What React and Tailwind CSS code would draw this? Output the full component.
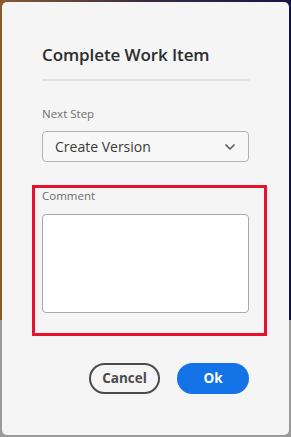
import { ChevronDown } from 'lucide-react';

const App = () => {
  return (
    <div className="relative w-[291px] h-[437px] overflow-hidden" style={{ fontFamily: '"Open Sans", "Noto Sans", sans-serif' }}>
      {/* Backdrop */}
      <div className="flex flex-col h-full">
        <div className="h-[320px] bg-gradient-to-r from-[#8a5a2a] via-[#3a2a40] to-[#16124a]" />
        <div className="flex-1 bg-[#9a9a9a]" />
      </div>

      {/* Dialog */}
      <div className="absolute left-[2px] top-[2px] w-[287px] h-[433px] bg-[#f5f5f5] rounded-[5px] flex flex-col px-[40px]">
        <h2 className="mt-[42px] text-[17px] font-semibold text-[#2c2c2c] leading-[22px] tracking-[-0.1px]">Complete Work Item</h2>
        <div className="mt-[13px] h-[2px] bg-[#e1e1e1]" />

        <label className="mt-[25px] text-[11.5px] text-[#6e6e6e] leading-[16px]">Next Step</label>
        <div className="mt-[9px] h-[31px] rounded-[4px] border border-[#b3b3b3] bg-[#f7f7f7] flex items-center justify-between pl-[12px] pr-[10px]">
          <span className="text-[14px] text-[#3a3a3a]">Create Version</span>
          <ChevronDown size={16} strokeWidth={2.5} className="text-[#5a5a5a]" />
        </div>

        {/* Highlighted comment field */}
        <div className="mt-[23px] -ml-[10px] -mr-[18px] h-[151px] border-[3px] border-[#e8112d] pl-[7px] pr-[15px] flex flex-col">
          <label className="text-[11.5px] text-[#6e6e6e] leading-[16px]">Comment</label>
          <textarea className="mt-[10px] h-[99px] w-full resize-none rounded-[4px] border border-[#a8a8a8] bg-white outline-none" />
        </div>

        <div className="mt-[27px] flex justify-end gap-[17px]">
          <button className="w-[71px] h-[31px] rounded-full border-[2px] border-[#4b4b4b] text-[13.5px] font-bold text-[#4b4b4b] leading-none">Cancel</button>
          <button className="w-[72px] h-[31px] rounded-full bg-[#1473e6] text-[13.5px] font-bold text-white leading-none">Ok</button>
        </div>
      </div>
    </div>
  );
};

export default App;
